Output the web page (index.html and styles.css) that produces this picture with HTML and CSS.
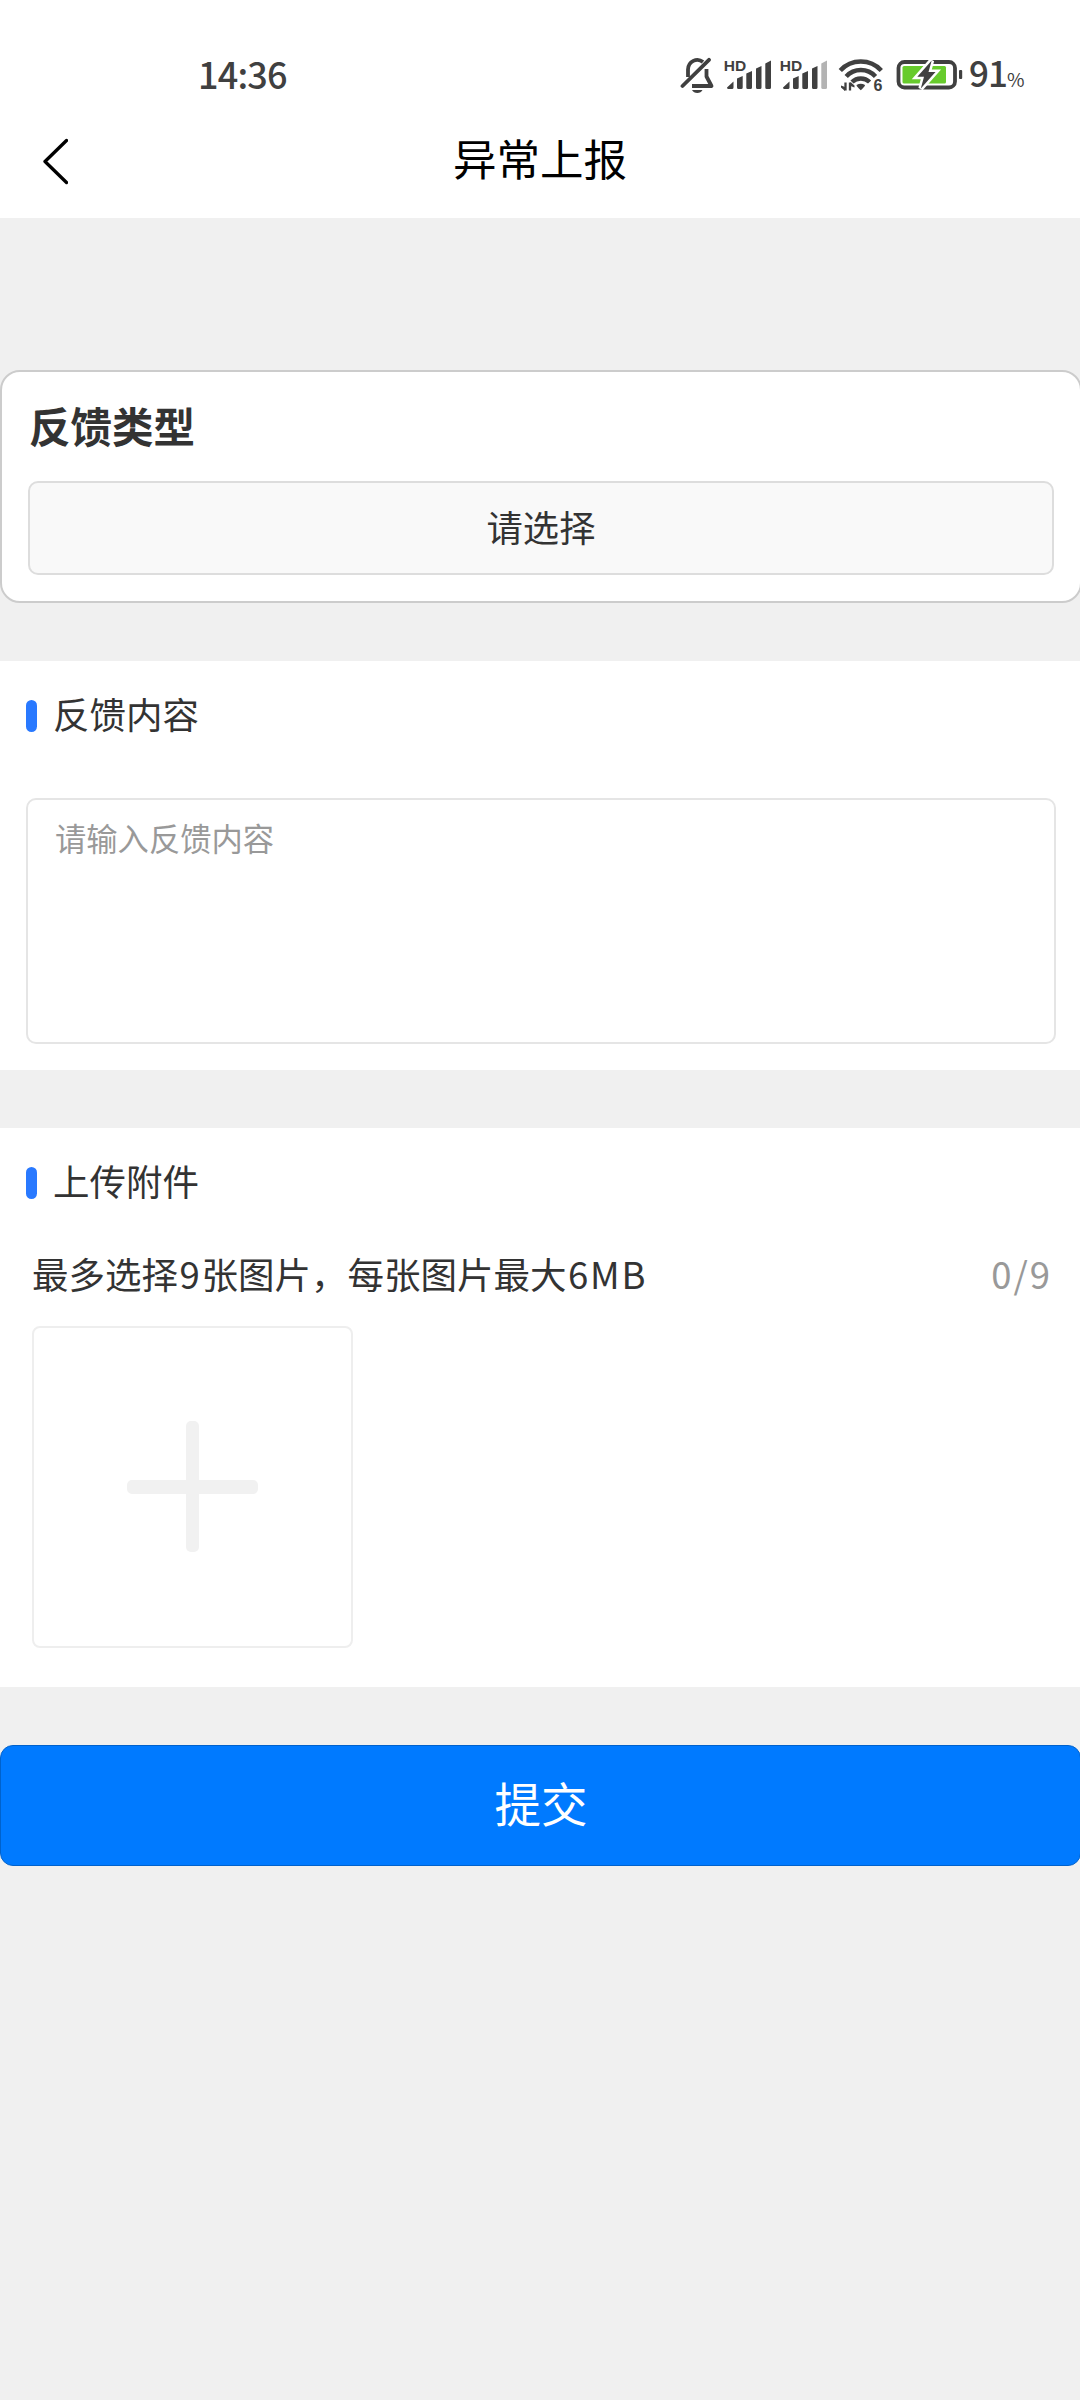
FILE: index.html
```html
<!DOCTYPE html>
<html lang="zh-CN">
<head>
<meta charset="utf-8">
<title>异常上报</title>
<link rel="stylesheet" href="styles.css">
</head>
<body>
<header class="header">
  <div class="status">
    <span class="clock">14:36</span>
    <div class="status-icons">
      <svg class="bell" viewBox="680 55 35 40" width="35" height="40" fill="none" stroke="#404040" stroke-width="3.8" stroke-linecap="round" stroke-linejoin="round">
        <path d="M688 77V69.500a9.300 9.800 0 0 1 15-7.500" stroke-linecap="butt"/>
        <path d="M706.500 69V76.500L711.500 86H692" stroke-linecap="butt"/>
        <path d="M682.500 86L709 59.800"/>
        <path d="M692 90h10.500q-1.500 3-5.200 3t-5.300-3z" fill="#404040" stroke="none"/>
      </svg>
      <svg class="signal" viewBox="724 55 48 40" width="48" height="40" fill="#404040">
        <text x="723.700" y="70.800" class="hd">HD</text>
        <path d="M727 87.500a1.500 1.500 0 0 0 1.500 1.500h3.500a1.500 1.500 0 0 0 1.500-1.500v-6zM737 78.500l5.700-2.500v11.500q0 1.500-1.500 1.500h-2.700q-1.500 0-1.500-1.500zM746.300 73.500l5.700-2.500v16.500q0 1.500-1.500 1.500h-2.700q-1.500 0-1.500-1.500zM756 68.500l5.500-2.500v21.500q0 1.500-1.500 1.500h-2.500q-1.500 0-1.500-1.500zM765.300 63.500l5.700-3v27q0 1.500-1.500 1.500h-2.700q-1.500 0-1.500-1.500z"/>
      </svg>
      <svg class="signal" viewBox="724 55 48 40" width="48" height="40" fill="#404040">
        <text x="723.700" y="70.800" class="hd">HD</text>
        <path d="M727 87.500a1.500 1.500 0 0 0 1.500 1.500h3.500a1.500 1.500 0 0 0 1.500-1.500v-6zM737 78.500l5.700-2.500v11.500q0 1.500-1.500 1.500h-2.700q-1.500 0-1.500-1.500zM746.300 73.500l5.700-2.500v16.500q0 1.500-1.500 1.500h-2.700q-1.500 0-1.500-1.500zM756 68.500l5.500-2.500v21.500q0 1.500-1.500 1.500h-2.500q-1.500 0-1.500-1.500z"/>
        <path fill="#b3b3b3" d="M765.300 63.500l5.700-3v27q0 1.500-1.500 1.500h-2.700q-1.500 0-1.500-1.500z"/>
      </svg>
      <svg class="wifi" viewBox="838 55 46 40" width="46" height="40" fill="none" stroke="#404040" stroke-width="4.500">
        <path d="M840.300 70.500a28 28 0 0 1 41 0M846.200 76.500a20 20 0 0 1 29.300 0M852 82a12.500 12.500 0 0 1 17.600 0"/>
        <path d="M856.500 85q4.200-2.700 8.500 0q0 1.500-4.200 5.200q-4.300-3.700-4.300-5.200z" fill="#404040" stroke="none"/>
        <path d="M845.500 82.500v8M850 90.500v-8" stroke-width="2.300"/>
        <path d="M841 85.500v2l4 3.500v-4zM854.500 87.500v-2l-4-3.500v4z" fill="#404040" stroke="none"/>
        <text x="873.500" y="91" class="wifi-gen">6</text>
      </svg>
      <svg class="battery" viewBox="896 55 67 40" width="67" height="40">
        <rect x="898.500" y="62" width="56.500" height="25.500" rx="6" fill="#fff" stroke="#404040" stroke-width="3.800"/>
        <rect x="902.500" y="66" width="43.500" height="17.500" rx="1.500" fill="#67cb2c"/>
        <path d="M931.700 60.500L917.300 76.800H924L920.800 88.500L935.500 72H928.500z" fill="#404040" stroke="#fff" stroke-width="5" paint-order="stroke"/>
        <rect x="959" y="70" width="3.200" height="9" rx="1" fill="#404040"/>
      </svg>
      <span class="percent">91<small>%</small></span>
    </div>
  </div>
  <div class="navbar">
    <svg class="back" viewBox="0 0 28 48" width="28" height="48" fill="none" stroke="#000" stroke-width="3.300" stroke-linecap="round" stroke-linejoin="round"><path d="M26.500 3.500L5 24.500L26.500 45.500"/></svg>
    <h1>异常上报</h1>
  </div>
</header>
<main>
  <section class="type-card">
    <h2>反馈类型</h2>
    <button class="select" type="button">请选择</button>
  </section>
  <section class="panel content-panel">
    <h3>反馈内容</h3>
    <div class="textarea">请输入反馈内容</div>
  </section>
  <section class="panel upload-panel">
    <h3>上传附件</h3>
    <div class="hint"><span>最多选择<b>9</b>张图片，每张图片最大<b>6MB</b></span><span class="count">0/9</span></div>
    <div class="add">
      <svg viewBox="0 0 131 131" width="131" height="131" fill="#f1f1f1"><rect x="59" width="13" height="131" rx="5"/><rect y="59" width="131" height="14" rx="5"/></svg>
    </div>
  </section>
  <button class="submit" type="button">提交</button>
</main>
</body>
</html>
```
FILE: styles.css
```css
* { box-sizing: border-box; }
body {
  margin: 0;
  min-height: 2400px;
  overflow-x: hidden;
  background: #f0f0f0;
  color: #333;
  font-family: "Noto Sans CJK SC", sans-serif;
}
h1, h2, h3 { margin: 0; font-weight: 400; }
button { font-family: inherit; color: inherit; padding: 0; display: block; }
svg { display: block; flex: none; }

.header { height: 218px; background: #fff; }
.status {
  height: 112px;
  padding: 38px 56px 0 198px;
  display: flex;
  justify-content: space-between;
  align-items: flex-start;
  color: #404040;
}
.clock {
  font: 500 36px/71px "Noto Sans CJK SC", sans-serif;
  letter-spacing: -0.8px;
}
.status-icons { display: flex; align-items: center; height: 74px; }
.signal { margin-left: 8px; }
.bell + .signal { margin-left: 9px; }
.wifi { margin-left: 10px; }
.battery { margin-left: 12px; }
.percent {
  width: 55px;
  margin-left: 6px;
  padding-top: 1px;
  font-size: 35px;
  font-weight: 500;
  line-height: 74px;
  letter-spacing: -1px;
  white-space: nowrap;
}
.percent small { font-size: 19px; font-weight: 400; letter-spacing: 0; }
.hd { font: bold 15.5px "Liberation Sans", sans-serif; }
.wifi-gen { font: bold 16px "Liberation Sans", sans-serif; fill: #404040; stroke: none; }

.navbar {
  display: grid;
  grid-template-columns: 40px 1fr 40px;
  height: 98px;
  padding: 0 40px;
  align-items: center;
}
h1 { color: #000; font-size: 43.5px; line-height: 90px; margin-top: -6px; text-align: center; }

.type-card {
  width: 1082px;
  height: 233px;
  margin-top: 152px;
  padding: 26px;
  border: 2px solid #ccc;
  border-radius: 20px;
  background: #fff;
}
h2 { height: 83px; padding-left: 1px; font-size: 41.5px; line-height: 55px; font-weight: 700; }
.select {
  width: 1026px;
  height: 94px;
  border: 2px solid #ddd;
  border-radius: 10px;
  background: #f9f9f9;
  font-size: 36.3px;
  line-height: 84px;
  padding-bottom: 4px;
}

.panel { margin-top: 58px; padding: 0 26px; background: #fff; }
h3 {
  display: flex;
  align-items: center;
  gap: 16px;
  height: 110px;
  font-size: 36.5px;
  line-height: 106px;
  padding-bottom: 4px;
}
h3::before {
  content: "";
  width: 11px;
  height: 32px;
  margin-top: 4px;
  border-radius: 5.5px;
  background: #2979ff;
}
.content-panel { height: 409px; }
.textarea {
  width: 1030px;
  height: 246px;
  margin-top: 27px;
  padding: 15px 27px;
  border: 2px solid #e5e5e5;
  border-radius: 10px;
  color: #999;
  font-size: 31.3px;
  line-height: 46px;
}
.upload-panel { height: 559px; }
.hint {
  display: flex;
  justify-content: space-between;
  height: 88px;
  padding: 0 2px 0 6px;
  font-size: 36.5px;
  line-height: 72px;
}
.hint b { font-weight: 400; letter-spacing: 1.8px; margin-left: 1.5px; }
.count { color: #999; letter-spacing: 2px; }
.add {
  display: grid;
  place-content: center;
  width: 321px;
  height: 322px;
  margin-left: 6px;
  padding-bottom: 1px;
  border: 2px solid #eee;
  border-radius: 8px;
}
.submit {
  width: 1081px;
  height: 121px;
  margin-top: 58px;
  border: 1px solid #0062cc;
  border-radius: 13px;
  background: #007aff;
  color: #fff;
  font-size: 46.5px;
  line-height: 110px;
  padding: 0 0 7px 1px;
}
```
